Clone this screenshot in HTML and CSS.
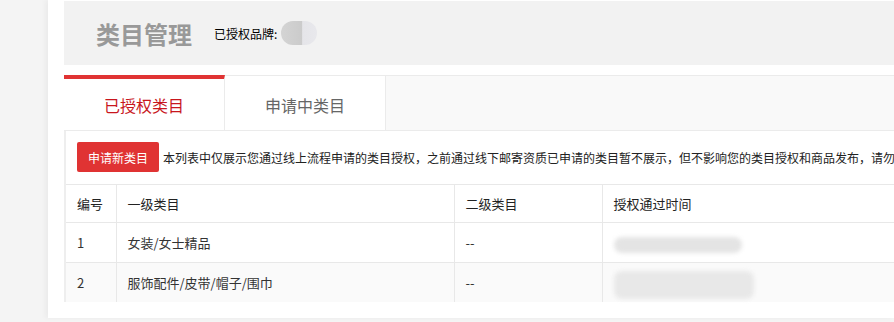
FILE: index.html
```html
<!DOCTYPE html>
<html lang="zh-CN">
<head>
    <meta charset="UTF-8">
    <title>类目管理</title>
    <link rel="stylesheet" href="styles.css">
</head>
<body>
    <div class="page">
        <div class="head">
            <h1>类目管理</h1>
            <span class="brand-label">已授权品牌:</span>
            <span class="brand-pill"></span>
        </div>

        <div class="tabs">
            <div class="tab on">已授权类目</div>
            <div class="tab">申请中类目</div>
        </div>

        <div class="panel">
            <div class="toolbar">
                <button class="btn">申请新类目</button>
                <span class="notice">本列表中仅展示您通过线上流程申请的类目授权，之前通过线下邮寄资质已申请的类目暂不展示，但不影响您的类目授权和商品发布，请勿</span>
            </div>
            <table class="list">
                <colgroup>
                    <col class="c1">
                    <col class="c2">
                    <col class="c3">
                    <col>
                </colgroup>
                <thead>
                    <tr>
                        <th>编号</th>
                        <th>一级类目</th>
                        <th>二级类目</th>
                        <th>授权通过时间</th>
                    </tr>
                </thead>
                <tbody>
                    <tr>
                        <td>1</td>
                        <td>女装/女士精品</td>
                        <td>--</td>
                        <td><span class="blur b1"></span></td>
                    </tr>
                    <tr class="odd">
                        <td>2</td>
                        <td>服饰配件/皮带/帽子/围巾</td>
                        <td>--</td>
                        <td><span class="blur b2"></span></td>
                    </tr>
                </tbody>
            </table>
        </div>
    </div>
</body>
</html>
```

FILE: styles.css
```css
html, body {
    margin: 0;
    padding: 0;
    overflow: hidden;
}
body {
    background: #f4f4f4;
    font-family: "Noto Sans CJK SC", "Liberation Sans", sans-serif;
    color: #333;
    height: 322px;
}
.page {
    margin-left: 48px;
    height: 317px;
    padding: 1px 0 0 16px;
    background: #fff;
    box-shadow: -3px 0 5px rgba(0, 0, 0, 0.04);
}
.head {
    height: 64px;
    background: #f2f2f2;
    display: flex;
    align-items: center;
    padding-left: 32px;
}
.head h1 {
    margin: 0 22px 0 0;
    font-size: 24px;
    font-weight: bold;
    color: #999;
}
.brand-label {
    font-size: 12px;
    color: #000;
    margin-right: 4px;
}
.brand-pill {
    width: 36px;
    height: 24px;
    border-radius: 12px;
    background: linear-gradient(90deg, #d4d4d4 0, #cbcbcb 58%, #e5e5e9 60%, #e8e8ec 100%);
}
.tabs {
    margin-top: 10px;
    height: 54px;
    display: flex;
    background: #f9f9f9;
    border-top: 1px solid #ebebeb;
    border-bottom: 1px solid #ebebeb;
}
.tab {
    width: 160px;
    background: #fff;
    border-right: 1px solid #ebebeb;
    font-size: 16px;
    color: #666;
    text-align: center;
    line-height: 58px;
}
.tab.on {
    margin-top: -1px;
    height: 51px;
    line-height: 52px;
    border-top: 4px solid #e03333;
    color: #c8161d;
}
.panel {
    border-left: 2px solid #eee;
    padding-top: 11px;
    background: #fff;
}
.toolbar {
    display: flex;
    align-items: center;
    padding-left: 11px;
    margin-bottom: 12px;
    white-space: nowrap;
    overflow: hidden;
}
.btn {
    flex-shrink: 0;
    height: 30px;
    width: 82px;
    border: 0;
    border-radius: 2px;
    background: #e03333;
    color: #fff;
    font-family: inherit;
    font-size: 12px;
    padding: 0;
    margin-right: 4px;
}
.notice {
    font-size: 12px;
    color: #222;
}
.list {
    width: 828px;
    border-collapse: collapse;
    font-size: 13px;
    table-layout: fixed;
}
.c1 { width: 50px; }
.c2 { width: 338px; }
.c3 { width: 148px; }
.list th, .list td {
    text-align: left;
    padding: 0 0 0 11px;
    border-top: 1px solid #e8e8e8;
    border-left: 1px solid #e8e8e8;
}
.list th:first-child, .list td:first-child {
    border-left: 0;
}
.list th {
    height: 37px;
    font-weight: normal;
    color: #222;
}
.list td {
    height: 39px;
}
.list tr.odd td {
    background: #fafafa;
}
.blur {
    display: block;
    background: #e4e4e4;
    filter: blur(2px);
    border-radius: 8px;
}
.b1 {
    width: 128px;
    height: 16px;
    margin-top: 4px;
}
.b2 {
    width: 140px;
    height: 28px;
    margin-top: 4px;
    background: #e8e8e8;
}
```
